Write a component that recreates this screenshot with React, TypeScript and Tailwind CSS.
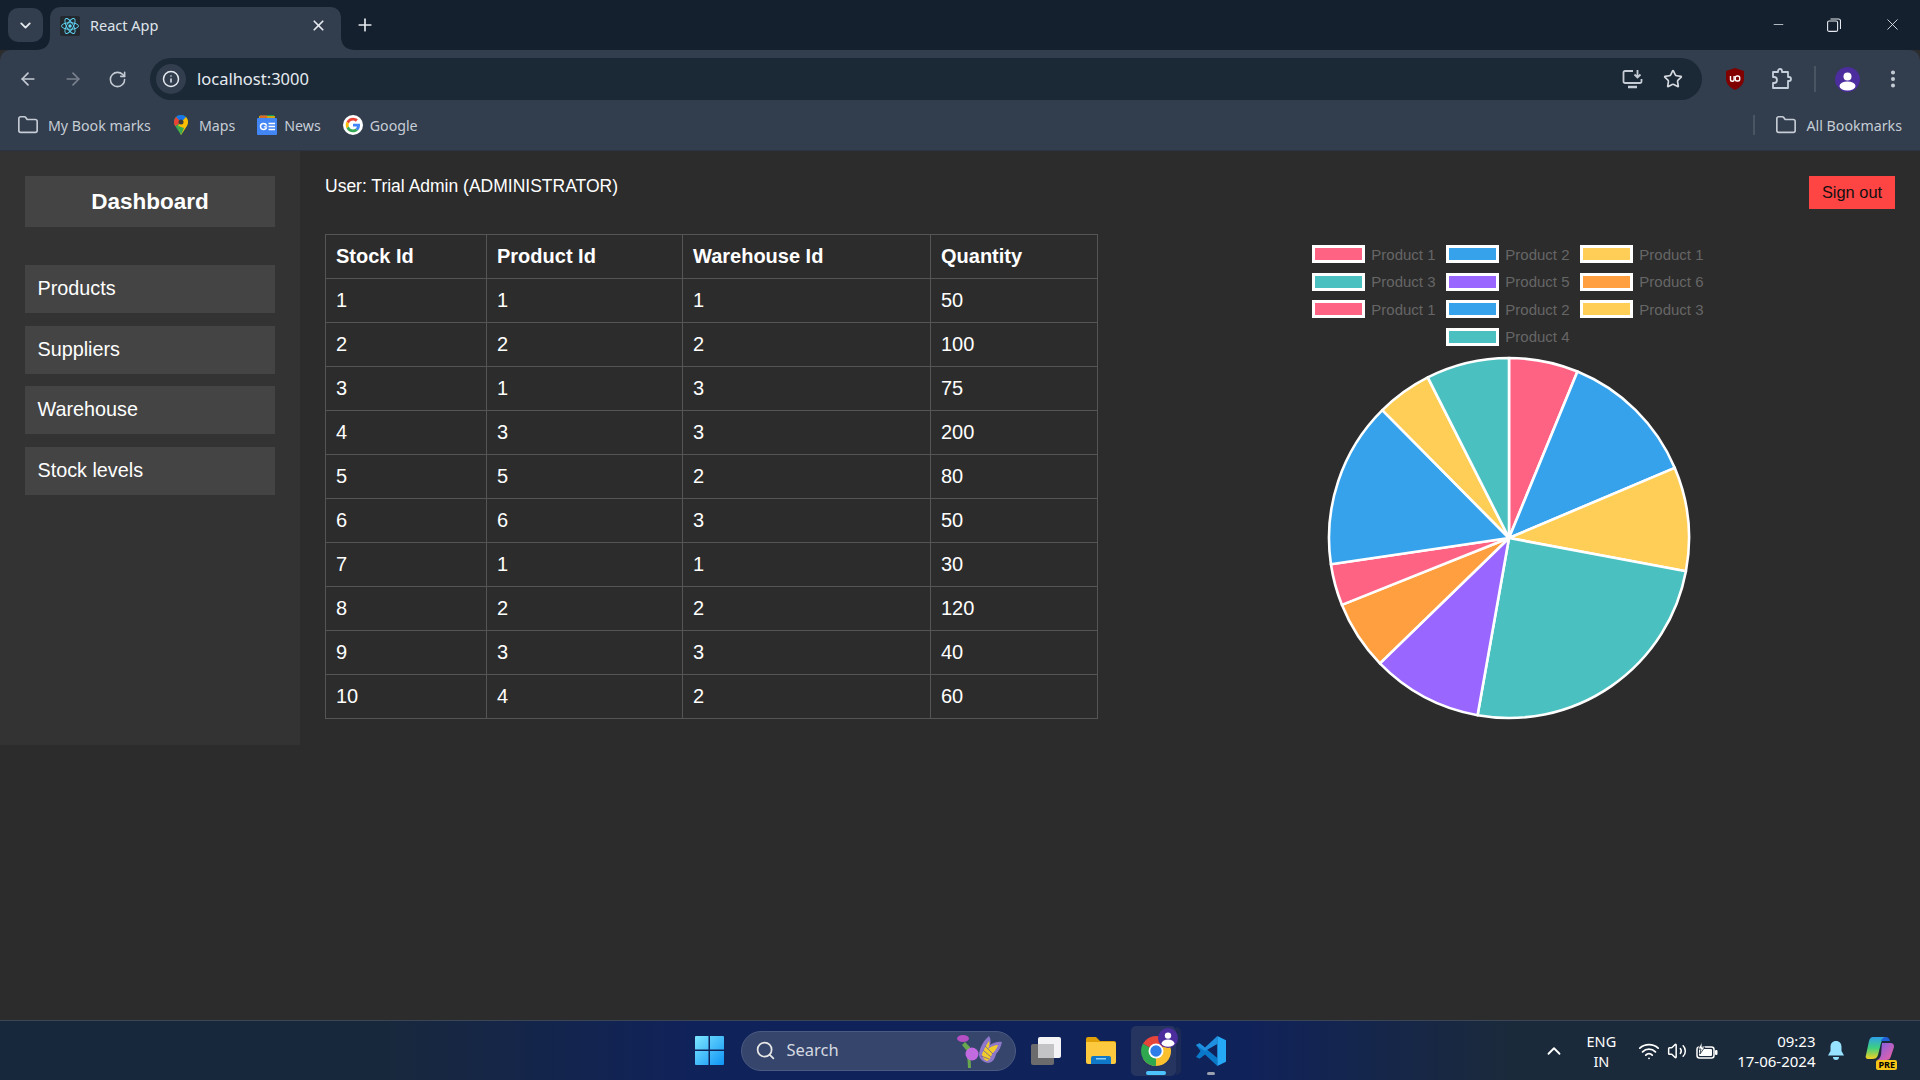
import { ArrowLeft, ArrowRight, ChevronDown, ChevronUp, EllipsisVertical, Folder, Info, Minus, Plus, RotateCw, Search, Star, Volume2, Wifi, X } from "lucide-react";

const stocks = [
  [1, 1, 1, 50],
  [2, 2, 2, 100],
  [3, 1, 3, 75],
  [4, 3, 3, 200],
  [5, 5, 2, 80],
  [6, 6, 3, 50],
  [7, 1, 1, 30],
  [8, 2, 2, 120],
  [9, 3, 3, 40],
  [10, 4, 2, 60],
];

const legend = [
  ["Product 1", "#FF6384"],
  ["Product 2", "#36A2EB"],
  ["Product 1", "#FFCE56"],
  ["Product 3", "#4BC0C0"],
  ["Product 5", "#9966FF"],
  ["Product 6", "#FF9F40"],
  ["Product 1", "#FF6384"],
  ["Product 2", "#36A2EB"],
  ["Product 3", "#FFCE56"],
  ["Product 4", "#4BC0C0"],
];

const navItems = ["Products", "Suppliers", "Warehouse", "Stock levels"];

function slice(cx: number, cy: number, r: number, from: number, to: number) {
  const a = (from * Math.PI) / 180;
  const b = (to * Math.PI) / 180;
  const large = to - from > 180 ? 1 : 0;
  return `M${cx} ${cy}L${cx + r * Math.cos(a)} ${cy + r * Math.sin(a)}A${r} ${r} 0 ${large} 1 ${cx + r * Math.cos(b)} ${cy + r * Math.sin(b)}Z`;
}

function PieChart() {
  const total = stocks.reduce((sum, s) => sum + s[3], 0);
  let angle = -90;
  return (
    <svg width="364" height="364" viewBox="0 0 364 364">
      {stocks.map((s, i) => {
        const from = angle;
        angle += (s[3] / total) * 360;
        return <path key={i} d={slice(182, 182, 180, from, angle)} fill={legend[i][1]} stroke="#fff" strokeWidth="2.6" strokeLinejoin="round" />;
      })}
    </svg>
  );
}

function ReactIcon() {
  return (
    <svg width="20" height="20" viewBox="0 0 20 20" className="shrink-0">
      <rect width="20" height="20" rx="2" fill="#24292f" />
      <g fill="none" stroke="#61dafb" strokeWidth="0.9">
        <ellipse cx="10" cy="10" rx="8.5" ry="3.3" />
        <ellipse cx="10" cy="10" rx="8.5" ry="3.3" transform="rotate(60 10 10)" />
        <ellipse cx="10" cy="10" rx="8.5" ry="3.3" transform="rotate(120 10 10)" />
      </g>
      <circle cx="10" cy="10" r="1.7" fill="#61dafb" />
    </svg>
  );
}

function MapsIcon() {
  return (
    <svg width="14" height="20" viewBox="0 0 14 20" className="shrink-0">
      <path d="M7 0C3 0 0 3 0 7c0 1.500.5 3 1.300 4.200L7 20l5.700-8.800C13.500 10 14 8.500 14 7c0-4-3-7-7-7z" fill="#34a853" />
      <path d="M11.900 2.100L7 7l-3 3.500L7 20l5.700-8.800C13.500 10 14 8.500 14 7c0-1.900-.8-3.700-2.100-4.900z" fill="#fbbc04" />
      <path d="M7 0C5 0 3.200.8 2 2.100L7 7l4.900-4.900C10.700.8 9 0 7 0z" fill="#1a73e8" />
      <path d="M2 2.100C.8 3.300 0 5.100 0 7c0 1.500.5 3 1.300 4.200L7 7z" fill="#ea4335" />
      <path d="M7 12l-3-1.500L7 20l3-7z" fill="#34a853" />
      <circle cx="7" cy="7" r="2.500" fill="#3c3c3c" />
    </svg>
  );
}

function NewsIcon() {
  return (
    <svg width="20" height="20" viewBox="0 0 20 20" className="shrink-0">
      <path d="M3 0h14l1 4H2z" fill="#0c9d58" />
      <path d="M2 1h16v3H2z" fill="#f9ab00" opacity="0.8" />
      <path d="M3 0h7v3H3z" fill="#ea4335" opacity="0.6" />
      <rect y="3" width="20" height="17" rx="1" fill="#4285f4" />
      <circle cx="6.500" cy="11.500" r="3" fill="none" stroke="#fff" strokeWidth="1.500" />
      <path d="M6.500 11.500H10" stroke="#4285f4" strokeWidth="1.500" />
      <path d="M6.800 11.800h2.800" stroke="#fff" strokeWidth="1.200" />
      <path d="M11.500 8.500H18M11.500 11.500H18M11.500 14.500H18" stroke="#fff" strokeWidth="1.500" />
    </svg>
  );
}

function GoogleIcon() {
  return (
    <svg width="20" height="20" viewBox="0 0 48 48" className="shrink-0">
      <circle cx="24" cy="24" r="24" fill="#fff" />
      <g transform="translate(6.500 6.500) scale(0.73)">
        <path fill="#EA4335" d="M24 9.500c3.500 0 6.700 1.200 9.200 3.600l6.900-6.900C35.900 2.400 30.500 0 24 0 14.600 0 6.500 5.400 2.600 13.200l8 6.200C12.500 13.700 17.800 9.500 24 9.500z" />
        <path fill="#4285F4" d="M47 24.500c0-1.600-.1-3.100-.4-4.500H24v9h12.900c-.6 3-2.200 5.500-4.800 7.200l7.700 6C44.300 38 47 31.800 47 24.500z" />
        <path fill="#FBBC05" d="M10.500 28.600c-.5-1.500-.8-3-.8-4.600s.3-3.100.8-4.600l-8-6.200C.9 16.500 0 20.100 0 24s.9 7.500 2.600 10.800l7.900-6.200z" />
        <path fill="#34A853" d="M24 48c6.500 0 11.900-2.100 15.900-5.800l-7.700-6c-2.100 1.500-4.900 2.300-8.200 2.300-6.200 0-11.500-4.200-13.400-9.900l-8 6.200C6.500 42.600 14.600 48 24 48z" />
      </g>
    </svg>
  );
}

function InstallIcon() {
  return (
    <svg width="22" height="20" viewBox="0 0 22 20" fill="none" stroke="#c5ccd5" strokeWidth="1.800" className="shrink-0">
      <path d="M11 2H3a1.500 1.500 0 0 0-1.500 1.500v9A1.500 1.500 0 0 0 3 14h15a1.500 1.500 0 0 0 1.500-1.500V10" />
      <path d="M6 18h9" strokeWidth="2.500" />
      <path d="M15.500 1v7M12.500 5.500l3 3 3-3" />
    </svg>
  );
}

function UblockIcon() {
  return (
    <svg width="20" height="22" viewBox="0 0 20 22" className="shrink-0">
      <path d="M10 0l9 3v8c0 5-4 8.500-9 11-5-2.500-9-6-9-11V3z" fill="#800000" />
      <path d="M5.500 8v3.500a1.800 1.800 0 0 0 3.600 0V8" fill="none" stroke="#fff" strokeWidth="1.400" />
      <rect x="10.300" y="8" width="4.400" height="5" rx="1.800" fill="none" stroke="#fff" strokeWidth="1.400" />
    </svg>
  );
}

function PuzzleIcon() {
  return (
    <svg width="22" height="22" viewBox="0 0 22 22" fill="none" stroke="#c5d0dc" strokeWidth="1.800" strokeLinejoin="round" className="shrink-0">
      <path d="M2 4h5V3a2 2 0 0 1 4 0v1h6v5h1a2 2 0 0 1 0 4h-1v7H2v-5h1a3 3 0 0 0 0-6H2z" />
    </svg>
  );
}

function Avatar({ size }: { size: number }) {
  return (
    <svg width={size} height={size} viewBox="0 0 25 25" className="shrink-0">
      <circle cx="12.500" cy="12.500" r="12.500" fill="#4c2d9e" />
      <circle cx="12.500" cy="9.500" r="4" fill="#fff" />
      <ellipse cx="12.500" cy="19" rx="8" ry="4.500" fill="#fff" />
    </svg>
  );
}

function WindowsIcon() {
  return (
    <svg width="29" height="29" viewBox="0 0 29 29" className="shrink-0">
      <defs>
        <linearGradient id="win" x1="0" y1="0" x2="1" y2="1">
          <stop offset="0" stopColor="#7de6ff" />
          <stop offset="1" stopColor="#0f94f5" />
        </linearGradient>
      </defs>
      <path d="M1 0h12.500v13.500H0V1a1 1 0 0 1 1-1zM15 0h13a1 1 0 0 1 1 1v12.500H15zM0 15h13.500v14H1a1 1 0 0 1-1-1zM15 15h14v13a1 1 0 0 1-1 1H15z" fill="url(#win)" />
    </svg>
  );
}

function Butterfly() {
  return (
    <svg width="46" height="34" viewBox="0 0 46 34" className="shrink-0">
      <path d="M8 8l5 5 1 21h-3l-1-17-5-6z" fill="#6aa84f" />
      <ellipse cx="6" cy="4.500" rx="6" ry="3.500" fill="#b44fc4" />
      <circle cx="15" cy="20" r="6.500" fill="#c26be0" />
      <path d="M22 20c1-7 5-14 10-18 2 3 2 6 1 9 3-2 8-4 12-3-1 5-3 9-6 12-1 5-4 9-8 9-5-1-9-4-9-9z" fill="#8f78c9" />
      <path d="M25 20c2-5 5-10 7-13 1 3 0 5-1 8 2-2 7-4 10-4-1 4-4 7-6 9-1 3-3 7-5 7-3-1-5-4-5-7z" fill="#f0cb2c" />
      <path d="M26 16l8 7M28 12l8 8M24 22l8 3" stroke="#6d5a9e" strokeWidth="0.800" />
    </svg>
  );
}

function TaskView() {
  return (
    <svg width="30" height="28" viewBox="0 0 30 28" className="shrink-0">
      <rect x="7" width="23" height="21" rx="2" fill="#f4f4f6" />
      <rect y="7" width="23" height="21" rx="2" fill="#6b6b6e" />
      <rect x="7" y="7" width="16" height="14" fill="#c4c4c6" />
    </svg>
  );
}

function FolderIcon() {
  return (
    <svg width="30" height="27" viewBox="0 0 30 27" className="shrink-0">
      <path d="M0 2a2 2 0 0 1 2-2h8l4 4h14a2 2 0 0 1 2 2v3H0z" fill="#e0a008" />
      <path d="M0 5h28a2 2 0 0 1 2 2v18a2 2 0 0 1-2 2H2a2 2 0 0 1-2-2z" fill="#fdc93f" />
      <path d="M5 27v-6a2 2 0 0 1 2-2h16a2 2 0 0 1 2 2v6z" fill="#0f78c8" />
      <rect x="10" y="21" width="10" height="1.500" fill="#8fd0f5" />
    </svg>
  );
}

function ChromeIcon() {
  return (
    <svg width="30" height="30" viewBox="0 0 30 30" className="shrink-0">
      <path d={slice(15, 15, 15, 30, 150)} fill="#fbc02d" />
      <path d={slice(15, 15, 15, 90, 210)} fill="#2fa84f" />
      <path d={slice(15, 15, 15, -150, -30)} fill="#e8453a" />
      <path d={slice(15, 15, 15, -30, 70)} fill="#fbc02d" />
      <circle cx="15" cy="15" r="7.500" fill="#fff" />
      <circle cx="15" cy="15" r="5.700" fill="#2f7de8" />
    </svg>
  );
}

function VsCodeIcon() {
  return (
    <svg width="30" height="30" viewBox="0 0 100 100" className="shrink-0">
      <path d="M0 30l12-6 59 49v27L30 62 12 76 0 70l15-20z" fill="#0a78c9" />
      <path d="M71 0L30 38 12 24 0 30l30 20 41-23z" fill="#1f8fe0" />
      <path d="M71 0l29 14v72l-29 14z" fill="#25a8f5" />
    </svg>
  );
}

function CopilotIcon() {
  return (
    <svg width="30" height="30" viewBox="0 0 30 30" className="shrink-0">
      <defs>
        <linearGradient id="cpa" x1="0" y1="0" x2="0" y2="1">
          <stop offset="0" stopColor="#2ea0e8" />
          <stop offset="0.5" stopColor="#3fd07f" />
          <stop offset="1" stopColor="#f5d020" />
        </linearGradient>
        <linearGradient id="cpb" x1="0" y1="0" x2="1" y2="1">
          <stop offset="0" stopColor="#7a60e8" />
          <stop offset="1" stopColor="#f060a0" />
        </linearGradient>
      </defs>
      <path d="M8 1h13c-3 1-4 3-5 6l-3 12c-1 3-3 4-6 4H3c-2 0-3-2-2-4L4 5c1-3 2-4 4-4z" fill="url(#cpa)" />
      <path d="M21 1c2 0 3 1 4 4h-9c1-3 3-4 5-4z" fill="#2060d8" />
      <path d="M17 7h8c3 0 4 1 4 4l-3 9c-1 3-2 4-5 4h-9c2-1 3-2 4-5z" fill="url(#cpb)" />
    </svg>
  );
}

function BatteryIcon() {
  return (
    <svg width="22" height="18" viewBox="0 0 22 18" className="shrink-0">
      <rect x="1" y="5" width="17" height="11" rx="2.500" fill="none" stroke="#fff" strokeWidth="1.500" />
      <rect x="3" y="7" width="13" height="7" rx="1" fill="#fff" />
      <rect x="19" y="8" width="2.500" height="5" rx="1" fill="#fff" />
      <path d="M6 0L2 7h3l-1 5 5-7H6z" fill="#fff" stroke="#1b2a3a" strokeWidth="0.800" />
    </svg>
  );
}

function TabFlare({ flip }: { flip?: boolean }) {
  return (
    <svg width="14" height="14" viewBox="0 0 14 14" className={flip ? "absolute bottom-0 left-[-14px] -scale-x-100" : "absolute bottom-0 right-[-14px]"}>
      <path d="M0 0C0 9 5 14 14 14H0z" fill="#323d4d" />
    </svg>
  );
}

function Bookmark({ label, icon, gap }: { label: string; icon: React.ReactNode; gap: string }) {
  return (
    <div className={`flex items-center ${gap}`}>
      {icon}
      <span className="pt-[1px] text-[14.2px] text-[#c6cdd6]">{label}</span>
    </div>
  );
}

export default function App() {
  return (
    <div className="flex h-screen w-[1920px] flex-col overflow-hidden bg-[#2c2c2c] font-['Liberation_Sans',Arial,sans-serif] text-white">
      {/* barra de pestanas */}
      <div className="flex h-[50px] shrink-0 items-end bg-[#15202f] font-['Noto_Sans',sans-serif]">
        <div className="mb-[8px] ml-[8px] flex h-[34px] w-[35px] items-center justify-center rounded-[10px] bg-[#323d4d]">
          <ChevronDown size={17} strokeWidth={2.6} color="#e6eaf0" />
        </div>
        <div className="relative ml-[7px] flex h-[43px] w-[291px] items-center rounded-t-[10px] bg-[#323d4d] pb-[6px] pl-[10px] pr-[14px]">
          <TabFlare flip />
          <ReactIcon />
          <span className="ml-[10px] flex-1 text-[14.5px] text-[#dfe4ea]">React App</span>
          <X size={17} strokeWidth={2.4} color="#e6eaf0" />
          <TabFlare />
        </div>
        <div className="mb-[15px] ml-[14px] flex w-[20px] items-center justify-center">
          <Plus size={20} strokeWidth={2} color="#e6eaf0" />
        </div>
        <div className="mb-[16px] ml-auto flex items-center pr-[21px]">
          <Minus size={15} strokeWidth={1.2} color="#e6eaf0" />
          <svg width="14" height="14" viewBox="0 0 14 14" fill="none" stroke="#e6eaf0" strokeWidth="1.100" className="ml-[41px]">
            <rect x="0.600" y="3" width="10" height="10.400" rx="1.500" />
            <path d="M3.500 1h8a2 2 0 0 1 2 2v8" />
          </svg>
          <X size={19} strokeWidth={1.1} color="#e6eaf0" className="-mr-[3px] ml-[42px]" />
        </div>
      </div>

      {/* barra de direcciones */}
      <div className="flex h-[50px] shrink-0 items-center rounded-t-[10px] bg-[#323d4d] pt-[8px] font-['Noto_Sans',sans-serif]">
        <ArrowLeft size={20} strokeWidth={2} color="#c5ccd5" className="ml-[18px]" />
        <ArrowRight size={20} strokeWidth={2} color="#79828e" className="ml-[25px]" />
        <RotateCw size={19} strokeWidth={2} color="#c5ccd5" className="ml-[25px]" />
        <div className="ml-[23px] flex h-[42px] w-[1552px] items-center rounded-full bg-[#1b2836] pl-[6px] pr-[19px]">
          <div className="flex h-[30px] w-[30px] items-center justify-center rounded-full bg-[#323d4d]">
            <Info size={18} strokeWidth={2} color="#e6eaf0" />
          </div>
          <span className="ml-[11px] flex-1 text-[16.5px] text-[#e6ebf0]">localhost:3000</span>
          <InstallIcon />
          <Star size={20} strokeWidth={2} color="#d5dae0" className="ml-[19px]" />
        </div>
        <div className="ml-[23px]">
          <UblockIcon />
        </div>
        <div className="ml-[26px]">
          <PuzzleIcon />
        </div>
        <div className="ml-[21px] h-[26px] w-[2px] bg-[#4a5564]" />
        <div className="ml-[19px]">
          <Avatar size={25} />
        </div>
        <EllipsisVertical size={22} strokeWidth={2.4} color="#c5ccd5" className="ml-[22px]" />
      </div>

      {/* marcadores */}
      <div className="flex h-[50px] shrink-0 items-center bg-[#323d4d] pl-[17px] pr-[18px] font-['Noto_Sans',sans-serif]">
        <Bookmark gap="gap-[9px]" icon={<Folder size={22} strokeWidth={1.8} color="#c5ccd5" />} label="My Book marks" />
        <div className="ml-[23px]">
          <Bookmark gap="gap-[11px]" icon={<MapsIcon />} label="Maps" />
        </div>
        <div className="ml-[22px]">
          <Bookmark gap="gap-[7px]" icon={<NewsIcon />} label="News" />
        </div>
        <div className="ml-[22px]">
          <Bookmark gap="gap-[7px]" icon={<GoogleIcon />} label="Google" />
        </div>
        <div className="ml-auto h-[20px] w-[2px] bg-[#4a5564]" />
        <div className="ml-[20px]">
          <Bookmark gap="gap-[10px]" icon={<Folder size={22} strokeWidth={1.8} color="#c5ccd5" />} label="All Bookmarks" />
        </div>
      </div>

      {/* contenido */}
      <div className="flex min-h-0 flex-1 items-start border-t border-[#2a3442] bg-[#2c2c2c]">
        <aside className="flex h-[594px] w-[300px] shrink-0 flex-col bg-[#333333] px-[25px] pt-[25px]">
          <div className="flex h-[51px] items-center justify-center bg-[#444444] text-[22.5px] font-bold">Dashboard</div>
          <nav className="mt-[38px] flex flex-col gap-[12.500px]">
            {navItems.map((item) => (
              <div key={item} className="flex h-[48px] items-center bg-[#444444] pl-[12.500px] text-[19.8px]">
                {item}
              </div>
            ))}
          </nav>
        </aside>

        <main className="min-w-0 flex-1 px-[25px] pt-[25px]">
          <div className="flex h-[58px] items-start justify-between">
            <p className="text-[17.5px] leading-[20px]">User: Trial Admin (ADMINISTRATOR)</p>
            <button className="h-[33px] w-[86px] bg-[#ff4444] text-[16.4px] text-[#111111]">Sign out</button>
          </div>

          <div className="flex items-start">
            <table className="w-[772px] table-fixed border-collapse text-[20px]">
              <colgroup>
                <col className="w-[161px]" />
                <col className="w-[196px]" />
                <col className="w-[248px]" />
                <col className="w-[167px]" />
              </colgroup>
              <thead>
                <tr className="h-[44px]">
                  {["Stock Id", "Product Id", "Warehouse Id", "Quantity"].map((h) => (
                    <th key={h} className="border border-[#555555] px-[10px] pb-[2px] text-left font-bold">
                      {h}
                    </th>
                  ))}
                </tr>
              </thead>
              <tbody>
                {stocks.map((row) => (
                  <tr key={row[0]} className="h-[44px]">
                    {row.map((cell, i) => (
                      <td key={i} className="border border-[#555555] px-[10px] pb-[2px]">
                        {cell}
                      </td>
                    ))}
                  </tr>
                ))}
              </tbody>
            </table>

            <div className="ml-[195.500px] flex w-[430px] flex-col items-center pt-[11px]">
              <div className="mr-[2.400px] flex w-[402px] flex-wrap justify-center gap-x-[12px] gap-y-[9.500px]">
                {legend.map((l, i) => (
                  <div key={i} className="flex h-[18px] w-[122px] items-center gap-[6px]">
                    <span className="h-[18px] w-[53px] shrink-0 border-[3px] border-white" style={{ backgroundColor: l[1] }} />
                    <span className="whitespace-nowrap text-[15px] leading-none text-[#666666]">{l[0]}</span>
                  </div>
                ))}
              </div>
              <div className="mt-[10px]">
                <PieChart />
              </div>
            </div>
          </div>
        </main>
      </div>

      {/* barra de tareas */}
      <footer className="flex h-[60px] shrink-0 items-center border-t border-[#3a4656] bg-[linear-gradient(90deg,#18283c_0%,#18283c_20%,#10225a_36%,#10225a_65%,#1b2a3a_79%,#1b2a3a_100%)] font-['Noto_Sans',sans-serif]">
        <div className="flex-1" />
        <div className="flex items-center">
          <WindowsIcon />
          <div className="ml-[17px] flex h-[40px] w-[275px] items-center rounded-full border border-[#4a5a80] bg-[#35456b] pl-[13px] pr-[12px]">
            <Search size={21} strokeWidth={2} color="#e6e6e6" />
            <span className="ml-[11px] flex-1 text-[16.5px] text-[#d6d9e0]">Search</span>
            <Butterfly />
          </div>
          <div className="ml-[15px]">
            <TaskView />
          </div>
          <div className="ml-[25px]">
            <FolderIcon />
          </div>
          <div className="relative ml-[15px] flex h-[50px] w-[45px] items-center rounded-[5px] bg-[#263560] pl-[10px]">
            <span className="absolute right-[-5px] top-[1px] h-[48px] w-[5px] rounded-r-[5px] bg-[#1c2b55]" />
            <ChromeIcon />
            <div className="absolute right-[-2px] top-[2px]">
              <Avatar size={20} />
            </div>
            <span className="absolute bottom-[1px] left-[15px] h-[4px] w-[20px] rounded-full bg-[#4cc2ff]" />
          </div>
          <div className="relative ml-[20px]">
            <VsCodeIcon />
            <span className="absolute bottom-[-9px] left-[11px] h-[3px] w-[8px] rounded-full bg-[#9aa0ad]" />
          </div>
        </div>
        <div className="flex flex-1 items-center justify-end text-white">
          <ChevronUp size={22} strokeWidth={2} />
          <div className="ml-[22px] flex flex-col items-center text-[14.5px] leading-[20px]">
            <span>ENG</span>
            <span>IN</span>
          </div>
          <Wifi size={22} strokeWidth={2} className="ml-[21.500px]" />
          <Volume2 size={20} strokeWidth={1.8} className="ml-[7.500px]" />
          <div className="ml-[9px]">
            <BatteryIcon />
          </div>
          <div className="ml-[19px] flex flex-col items-end text-[15px] leading-[20px]">
            <span>09:23</span>
            <span>17-06-2024</span>
          </div>
          <svg width="18" height="22" viewBox="0 0 18 22" className="ml-[11px] shrink-0">
            <path d="M9 1c3.500 0 5.500 2.500 5.500 6v4l2.500 4.500H1L3.500 11V7C3.500 3.500 5.500 1 9 1z" fill="#96e2ff" />
            <path d="M6 17h6a3 3 0 0 1-6 0z" fill="#96e2ff" />
          </svg>
          <div className="relative ml-[20.500px] mr-[25px]">
            <CopilotIcon />
            <span className="absolute bottom-[-4px] right-[-2px] rounded-[2px] bg-[#f5c518] px-[2px] text-[9px] font-bold leading-[10px] text-black">PRE</span>
          </div>
        </div>
      </footer>
    </div>
  );
}
